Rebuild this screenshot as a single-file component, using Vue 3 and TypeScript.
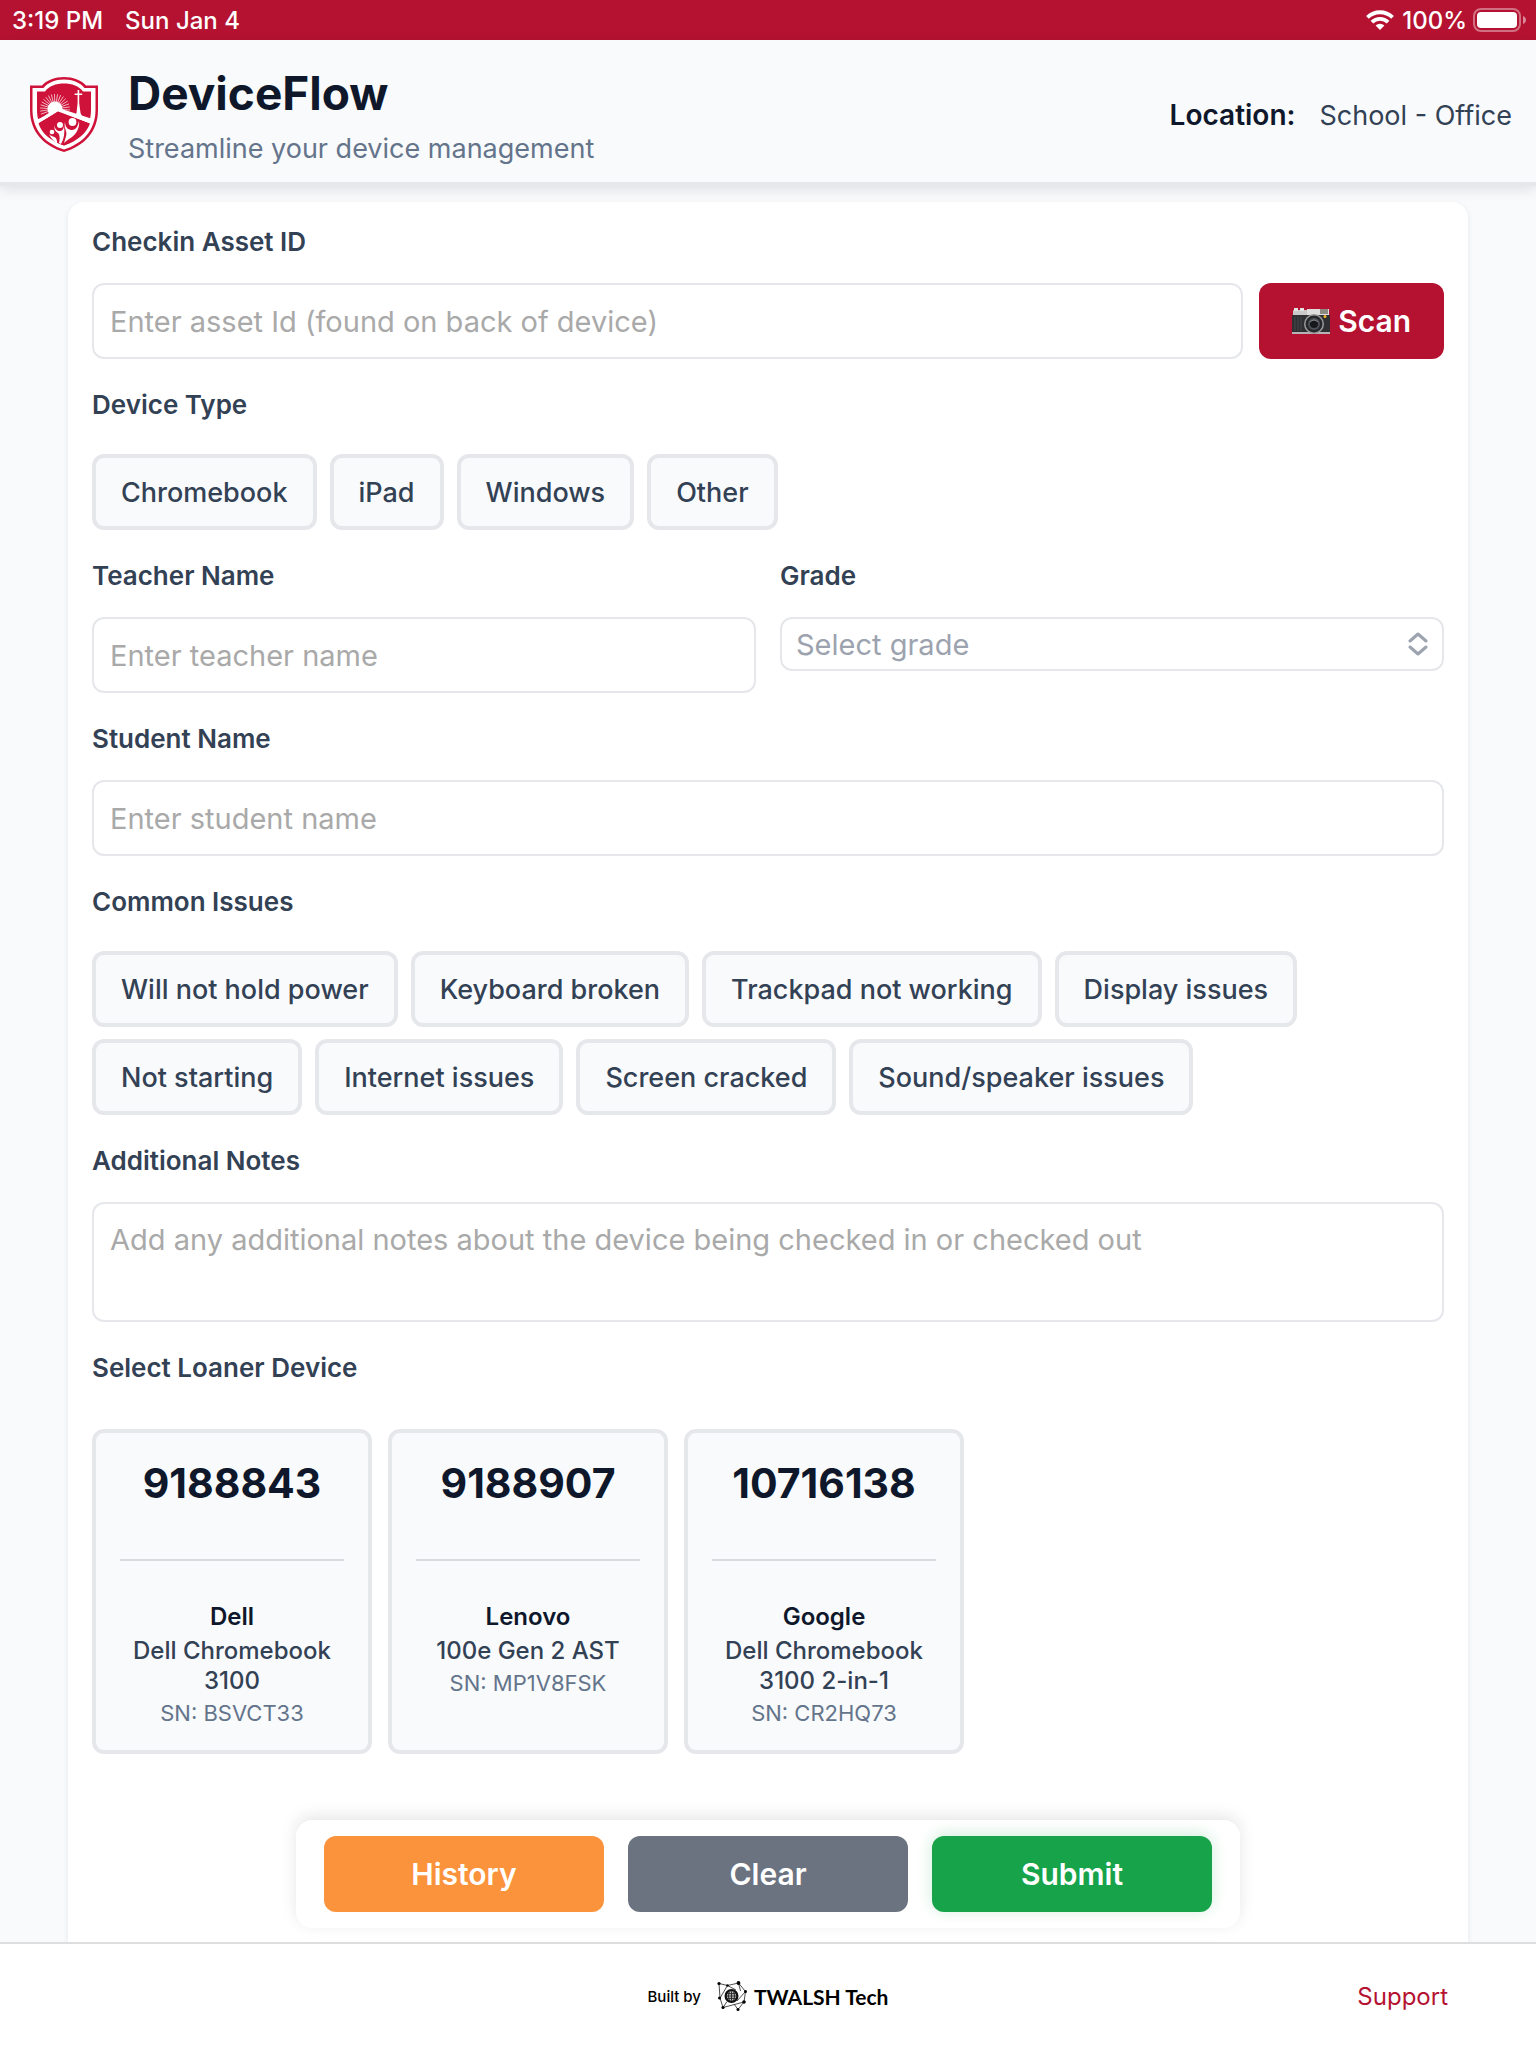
<script setup lang="ts">
import { ref } from 'vue'

interface Loaner {
  id: string
  brand: string
  model: string
  serial: string
}

const deviceTypes: string[] = ['Chromebook', 'iPad', 'Windows', 'Other']
const issues: string[] = [
  'Will not hold power',
  'Keyboard broken',
  'Trackpad not working',
  'Display issues',
  'Not starting',
  'Internet issues',
  'Screen cracked',
  'Sound/speaker issues',
]
const loaners: Loaner[] = [
  { id: '9188843', brand: 'Dell', model: 'Dell Chromebook 3100', serial: 'BSVCT33' },
  { id: '9188907', brand: 'Lenovo', model: '100e Gen 2 AST', serial: 'MP1V8FSK' },
  { id: '10716138', brand: 'Google', model: 'Dell Chromebook 3100 2-in-1', serial: 'CR2HQ73' },
]
const grades: string[] = ['K', '1', '2', '3', '4', '5', '6', '7', '8']

const assetId = ref('')
const deviceType = ref('')
const teacher = ref('')
const grade = ref('')
const student = ref('')
const selectedIssues = ref<string[]>([])
const notes = ref('')
const loaner = ref('')

function toggleIssue(issue: string): void {
  selectedIssues.value = selectedIssues.value.includes(issue)
    ? selectedIssues.value.filter((i) => i !== issue)
    : [...selectedIssues.value, issue]
}

function clearForm(): void {
  assetId.value = ''
  deviceType.value = ''
  teacher.value = ''
  grade.value = ''
  student.value = ''
  selectedIssues.value = []
  notes.value = ''
  loaner.value = ''
}

// Rays of the sun in the school crest
const rays: number[] = Array.from({ length: 19 }, (_, i) => 160 + i * 12)
</script>

<template>
  <div class="app">
    <div class="status">
      <span>3:19 PM</span>
      <span class="date">Sun Jan 4</span>
      <svg class="wifi" viewBox="0 0 28 20" width="28" height="20" aria-hidden="true">
        <g fill="none" stroke="#fff" stroke-width="3.8">
          <path d="M1.400 7.400A18 18 0 0 1 26.600 7.400" />
          <path d="M5.900 12.200A11.600 11.600 0 0 1 22.100 12.200" />
        </g>
        <path d="M9.600 15.600a6.300 6.300 0 0 1 8.800 0L14 20z" fill="#fff" />
      </svg>
      <span>100%</span>
      <svg class="battery" viewBox="0 0 54 24" width="54" height="24" aria-hidden="true">
        <rect x="1" y="1" width="46" height="22" rx="7" fill="none" stroke="#fff" stroke-opacity=".4" stroke-width="2" />
        <rect x="4" y="4" width="40" height="16" rx="4" fill="#fff" />
        <path d="M50 8c4 1.500 4 6.500 0 8z" fill="#fff" fill-opacity=".5" />
      </svg>
    </div>

    <header class="header">
      <svg class="crest" viewBox="0 0 80 80" width="80" height="80" aria-hidden="true">
        <path d="M40 2C49 2 57 5 62 10.500h12V35C74 57 60 71 40 77 20 71 6 57 6 35V10.500h12C23 5 31 2 40 2z" fill="#cf1239" />
        <path d="M40 4.500C49 4.500 56 7.500 60.500 13H71.500V35C71.500 55 59 68.500 40 74.500 21 68.500 8.500 55 8.500 35V13H19.500C24 7.500 31 4.500 40 4.500z" fill="#fff" />
        <path d="M40 8.500C48 8.500 55 11 59 16.500H67V35C67 53 56 64.500 40 70.500 24 64.500 13 53 13 35V16.500H21C25 11 32 8.500 40 8.500z" fill="#cf1239" />
        <g stroke="#fff" stroke-width=".8" stroke-opacity=".8">
          <line v-for="a in rays" :key="a" x1="6" y1="0" x2="15" y2="0" :transform="`translate(31 34) rotate(${a})`" />
        </g>
        <circle cx="31" cy="34" r="7.500" fill="#fff" />
        <path d="M53.600 15h1.600v3.600h3V20h-3v8L56.500 38 58.500 42h-8l2-4L53.600 28v-8h-3v-1.400h3z" fill="#fff" />
        <path d="M13 44.500 22 41 33 32.500 67 43.500V49L34.500 37 14 48.500z" fill="#fff" />
        <path d="M14.500 48.500 34.500 36 66 48.500C62 59 53 66 40 70.500 27 66 18 59 14.500 48.500z" fill="#cf1239" />
        <path d="M14 46.500 33.500 34.500 67 47" fill="none" stroke="#fff" stroke-width="3" />
        <g fill="#fff">
          <circle cx="48.500" cy="47" r="3.900" />
          <circle cx="36" cy="50" r="3" />
          <circle cx="28" cy="57" r="2.300" />
          <path d="M41 47c0 7 5 8 7 8 4 0 6-4 7-9 1 7-3 13-7 16-3 2-6 4-8 6 2-6 3-9 2-12-1-3-2-6-1-9z" />
          <path d="M30.500 50c0 4 3 6 5 6 3 0 4-2 4.500-5 1 7 0 13-3 18l-2-1c1-4 1-8-1-10-3-2-4-4-3.500-8z" />
          <path d="M24.500 58c1 3 4 3 6 4 2 1 3 4 2.500 6.500C30 66 27 64 24.500 58z" />
        </g>
      </svg>
      <div class="brand">
        <h1>DeviceFlow</h1>
        <p>Streamline your device management</p>
      </div>
      <div class="location"><strong>Location:</strong><span>School - Office</span></div>
    </header>

    <main class="main">
      <form class="card" @submit.prevent>
        <div class="section">
          <label class="label" for="asset">Checkin Asset ID</label>
          <div class="scan-row">
            <input id="asset" v-model="assetId" class="field" type="text" placeholder="Enter asset Id (found on back of device)" />
            <button class="scan" type="button">
              <svg viewBox="0 0 38 28" width="38" height="28" aria-hidden="true">
                <rect x="1" y="3" width="36" height="6" rx="1" fill="#c9c9c9" />
                <path d="M2 1h4v3H2zM8 1h4v3H8z" fill="#e4e4e4" />
                <path d="M15 2h22v6H15z" fill="#dedede" />
                <rect x="28" y="2" width="8" height="5" fill="#8d8a83" />
                <rect x="0" y="8" width="38" height="18" rx="1" fill="#2f3033" />
                <path d="M3 10v14M6 10v14M9 10v14" stroke="#44464a" />
                <rect x="0" y="25" width="38" height="2" fill="#b5b5b5" />
                <circle cx="22" cy="17" r="10" fill="#9b9b9b" />
                <circle cx="22" cy="17" r="8.500" fill="#26282c" />
                <circle cx="22" cy="17" r="6" fill="#4d5157" />
                <circle cx="22" cy="17" r="4" fill="#17181b" />
                <path d="M18 15q4-4 8 0" fill="none" stroke="#8b9098" />
                <circle cx="33" cy="9.500" r="1.500" fill="#f5b52c" />
              </svg>
              Scan
            </button>
          </div>
        </div>

        <div class="section" role="group" aria-labelledby="type-label">
          <span id="type-label" class="label">Device Type</span>
          <div class="chips">
            <button
              v-for="t in deviceTypes"
              :key="t"
              type="button"
              class="chip"
              :class="{ active: deviceType === t }"
              :aria-pressed="deviceType === t"
              @click="deviceType = t"
            >{{ t }}</button>
          </div>
        </div>

        <div class="section columns">
          <div>
            <label class="label" for="teacher">Teacher Name</label>
            <input id="teacher" v-model="teacher" class="field" type="text" placeholder="Enter teacher name" />
          </div>
          <div>
            <label class="label" for="grade">Grade</label>
            <div class="select-wrap">
              <select id="grade" v-model="grade" class="select">
                <option value="">Select grade</option>
                <option v-for="g in grades" :key="g" :value="g">{{ g }}</option>
              </select>
              <svg class="chevrons" viewBox="0 0 20 24" width="20" height="24" aria-hidden="true">
                <path d="M2 9 10 2l8 7M2 15l8 7 8-7" fill="none" stroke="#9ca3af" stroke-width="3" stroke-linecap="round" stroke-linejoin="round" />
              </svg>
            </div>
          </div>
        </div>

        <div class="section">
          <label class="label" for="student">Student Name</label>
          <input id="student" v-model="student" class="field" type="text" placeholder="Enter student name" />
        </div>

        <div class="section" role="group" aria-labelledby="issues-label">
          <span id="issues-label" class="label">Common Issues</span>
          <div class="chips">
            <button
              v-for="i in issues"
              :key="i"
              type="button"
              class="chip"
              :class="{ active: selectedIssues.includes(i) }"
              :aria-pressed="selectedIssues.includes(i)"
              @click="toggleIssue(i)"
            >{{ i }}</button>
          </div>
        </div>

        <div class="section">
          <label class="label" for="notes">Additional Notes</label>
          <textarea id="notes" v-model="notes" class="field notes" placeholder="Add any additional notes about the device being checked in or checked out"></textarea>
        </div>

        <div class="section" role="group" aria-labelledby="loaner-label">
          <span id="loaner-label" class="label">Select Loaner Device</span>
          <div class="loaners">
            <button
              v-for="l in loaners"
              :key="l.id"
              type="button"
              class="loaner"
              :class="{ active: loaner === l.id }"
              :aria-pressed="loaner === l.id"
              @click="loaner = l.id"
            >
              <span class="number">{{ l.id }}</span>
              <span class="rule"></span>
              <span class="maker">{{ l.brand }}</span>
              <span class="model">{{ l.model }}</span>
              <span class="serial">SN: {{ l.serial }}</span>
            </button>
          </div>
        </div>

        <div class="actions">
          <button type="button" class="action history">History</button>
          <button type="button" class="action clear" @click="clearForm">Clear</button>
          <button type="submit" class="action submit">Submit</button>
        </div>
      </form>
    </main>

    <footer class="footer">
      <div class="built">
        <span class="by">Built by</span>
        <svg viewBox="0 0 30 30" width="30" height="30" aria-hidden="true">
          <path d="M2 2.500 10.500 4.500 21.500 2l7 8.500L27 21l-6 7.500L17 23M2 2.500 3 17l3 9.500L27 21M10.500 4.500 3 17M21.500 2l2 8M10.500 4.500 19 9M28.500 10.500 20 20M6 26.500l4-6" fill="none" stroke="#222" stroke-width=".8" />
          <circle cx="14.500" cy="15" r="7" fill="#111" />
          <circle cx="14.500" cy="15" r="4.700" fill="#bbb" />
          <path d="M9.800 15h9.400M14.500 10.300v9.400M10.500 12.600h8M10.500 17.400h8M12.300 11q-2 4 0 8M16.700 11q2 4 0 8" fill="none" stroke="#111" stroke-width=".8" />
          <g fill="#000">
            <circle cx="2" cy="2.500" r="1.600" />
            <circle cx="10.500" cy="4.500" r="1.200" />
            <circle cx="21.500" cy="2" r="1.900" />
            <circle cx="28.500" cy="10.500" r="1.500" />
            <circle cx="27" cy="21" r="1.800" />
            <circle cx="21" cy="28.500" r="1.500" />
            <circle cx="6" cy="26.500" r="1.600" />
            <circle cx="2.500" cy="17" r="1.500" />
          </g>
        </svg>
        <span class="company">TWALSH Tech</span>
      </div>
      <a class="support" href="#support">Support</a>
    </footer>
  </div>
</template>

<style>
body {
  margin: 0;
  background: #f8fafc;
}
</style>

<style scoped>
.app {
  min-height: 100vh;
  display: flex;
  flex-direction: column;
  font-family: Inter, 'Liberation Sans', sans-serif;
  color: #0f172a;
  background: #f8fafc;
}
.app *,
.app *::before {
  box-sizing: border-box;
}
button,
input,
select,
textarea {
  font: inherit;
  margin: 0;
}
button {
  cursor: pointer;
}
.status {
  height: 40px;
  display: flex;
  align-items: center;
  padding: 0 9px 0 12px;
  background: #b51231;
  color: #fff;
  font-size: 24px;
  font-weight: 500;
}
.date {
  margin-left: 22px;
}
.wifi {
  margin-left: auto;
  margin-right: 8px;
}
.battery {
  margin-left: 6px;
}
.header {
  position: relative;
  display: flex;
  align-items: center;
  gap: 24px;
  min-height: 146px;
  padding: 8px 24px 0;
  background: #f8fafc;
  border-bottom: 4px solid #e5e7eb;
  box-shadow: 0 4px 12px rgba(0, 0, 0, 0.1);
}
.brand {
  flex: 1;
}
h1 {
  margin: 0;
  font-size: 46px;
  line-height: 64px;
  font-weight: 700;
}
.brand p {
  margin: 4px 0 0;
  font-size: 27px;
  line-height: 40px;
  color: #64748b;
}
.location {
  display: flex;
  align-items: baseline;
  gap: 24px;
  font-size: 27px;
  color: #334155;
}
.location strong {
  font-size: 28px;
  font-weight: 600;
  color: #0f172a;
}
.main {
  flex: 1;
  display: flex;
  padding: 16px 68px 0;
}
.card {
  flex: 1;
  min-width: 0;
  padding: 22px 24px 14px;
  background: #fff;
  border-radius: 16px 16px 0 0;
  box-shadow: 0 2px 6px rgba(0, 0, 0, 0.08);
}
.section + .section {
  margin-top: 28px;
}
.label {
  display: block;
  margin-bottom: 24px;
  font-size: 26px;
  line-height: 35px;
  font-weight: 600;
  color: #334155;
}
.scan-row {
  display: flex;
  gap: 16px;
}
.field {
  display: block;
  width: 100%;
  min-width: 0;
  height: 76px;
  padding: 0 16px;
  border: 2px solid #e5e7eb;
  border-radius: 12px;
  background: #fff;
  color: #0f172a;
  font-size: 29px;
  outline-color: #b51231;
}
.field::placeholder {
  color: #a9a9a9;
  opacity: 1;
}
.notes {
  height: 120px;
  padding: 16px;
  line-height: 40px;
  resize: none;
}
.scan {
  display: flex;
  align-items: center;
  justify-content: center;
  gap: 8px;
  flex: none;
  height: 76px;
  padding: 0 33px;
  border: 0;
  border-radius: 12px;
  background: #b51231;
  color: #fff;
  font-size: 30px;
  font-weight: 600;
}
.chips {
  display: flex;
  flex-wrap: wrap;
  gap: 12px 13px;
  margin-top: 32px;
}
.label:has(+ .chips) {
  margin-bottom: 0;
}
.chip {
  height: 76px;
  padding: 0 25px;
  border: 4px solid #e5e7eb;
  border-radius: 12px;
  background: #f8fafc;
  color: #334155;
  font-size: 27px;
  font-weight: 500;
}
.columns {
  display: grid;
  grid-template-columns: 1fr 1fr;
  gap: 24px;
}
.select-wrap {
  position: relative;
}
.select {
  display: block;
  width: 100%;
  height: 54px;
  padding: 0 48px 0 14px;
  appearance: none;
  border: 2px solid #e5e7eb;
  border-radius: 12px;
  background: #fff;
  color: #9ca3af;
  font-size: 29px;
}
.chevrons {
  position: absolute;
  right: 16px;
  top: 15px;
  pointer-events: none;
}
.loaners {
  display: flex;
  flex-wrap: wrap;
  gap: 16px;
  margin-top: 44px;
}
.label:has(+ .loaners) {
  margin-bottom: 0;
}
.loaner {
  display: flex;
  flex-direction: column;
  align-items: center;
  width: 280px;
  padding: 24px;
  border: 4px solid #e5e7eb;
  border-radius: 12px;
  background: #f8fafc;
  text-align: center;
}
.number {
  font-size: 41px;
  line-height: 52px;
  font-weight: 700;
  color: #0f172a;
}
.rule {
  align-self: stretch;
  height: 2px;
  margin: 50px 0 41px;
  background: #d8dadd;
}
.maker {
  font-size: 24px;
  line-height: 30px;
  font-weight: 600;
  color: #0f172a;
}
.model {
  margin: 4px 0;
  font-size: 24px;
  line-height: 30px;
  font-weight: 500;
  color: #334155;
}
.serial {
  font-size: 22px;
  line-height: 26px;
  color: #64748b;
}
.chip.active,
.loaner.active {
  border-color: #b51231;
}
.actions {
  display: flex;
  gap: 24px;
  width: fit-content;
  margin: 66px auto 0;
  padding: 16px 28px;
  border-radius: 16px;
  background: #fff;
  box-shadow: 0 -4px 16px rgba(0, 0, 0, 0.1);
}
.action {
  width: 280px;
  height: 76px;
  border: 0;
  border-radius: 12px;
  color: #fff;
  font-size: 30px;
  font-weight: 600;
}
.history {
  background: #fb923c;
}
.clear {
  background: #6b7280;
}
.submit {
  background: #16a34a;
  box-shadow: 0 -2px 16px rgba(22, 163, 74, 0.2);
}
.footer {
  position: relative;
  display: grid;
  grid-template-columns: 1fr auto 1fr;
  align-items: center;
  height: 106px;
  padding: 0 88px;
  border-top: 2px solid #dedee0;
  background: #fff;
}
.built {
  grid-column: 2;
  display: flex;
  align-items: center;
  color: #000;
}
.by {
  margin-right: 16px;
  font-size: 15px;
  font-weight: 500;
}
.company {
  margin-left: 7px;
  font-family: Lato, 'Liberation Sans', sans-serif;
  font-size: 21px;
  font-weight: 700;
}
.support {
  justify-self: end;
  font-size: 24px;
  color: #b51231;
  text-decoration: none;
}
</style>
